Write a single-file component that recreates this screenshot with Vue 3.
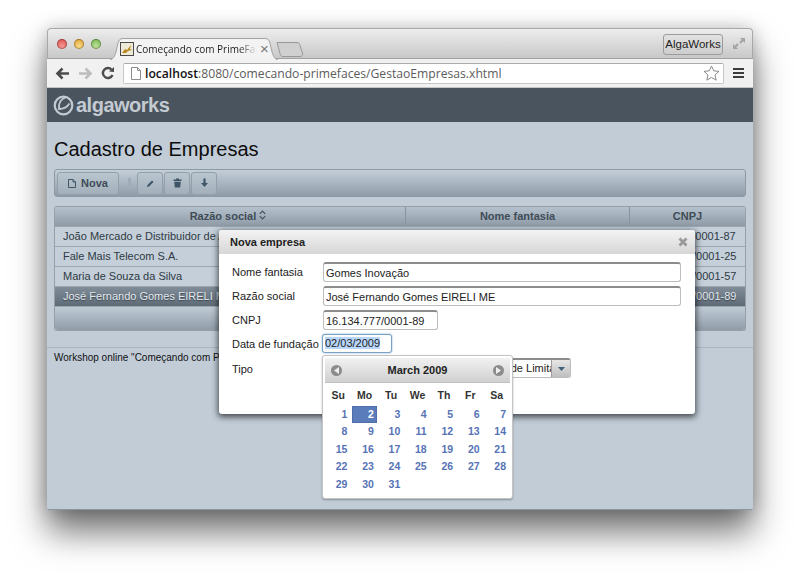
<template>
  <div class="stage">
    <div class="window">
      <!-- barra de abas do navegador -->
      <div class="tabstrip">
        <div class="lights">
          <span class="light light--red"></span>
          <span class="light light--yellow"></span>
          <span class="light light--green"></span>
        </div>
        <div class="tab">
          <svg class="tab__shape" width="168" height="22" viewBox="0 0 168 22">
            <path d="M0 21.500 C3 21.500 4.500 19 6 14 L8 5 C9 2 10 0.500 13 0.500 H155 C158 0.500 159 2 160 5 L162 14 C163.500 19 165 21.500 168 21.500" fill="#f3f3f3" stroke="#a2a2a2" />
          </svg>
          <svg class="favicon" width="14" height="14" viewBox="0 0 14 14">
            <rect x="0.500" y="0.500" width="13" height="13" fill="#efe9d8" stroke="#4a4a4a" />
            <path d="M2 11 L5 7 L7 8 L11 3 L10 7 L12 8 L8 9 L6 11 Z" fill="#b98a22" />
          </svg>
          <span class="tab__title">Começando com PrimeFaces</span>
          <span class="tab__close">×</span>
        </div>
        <svg class="newtab" width="28" height="15" viewBox="0 0 28 15">
          <path d="M1 0.500 H21 C23 0.500 23.500 2 24 3.500 L26.500 11 C27 13 26 14.500 24 14.500 H7 C5 14.500 4.500 13 4 11.500 Z" fill="#d0d0d0" stroke="#989898" />
        </svg>
        <div class="profile">AlgaWorks</div>
        <svg class="expand" width="14" height="13" viewBox="0 0 14 13">
          <path d="M8 1 H13 V6 L11.300 4.300 L8.800 6.800 L7.200 5.200 L9.700 2.700 Z M1 7 L2.700 8.700 L5.200 6.200 L6.800 7.800 L4.300 10.300 L6 12 H1 Z" fill="#a4a4a4" />
        </svg>
      </div>

      <!-- barra de endereço -->
      <div class="navbar">
        <svg class="navicon" width="15" height="13" viewBox="0 0 15 13">
          <path d="M14 6.500 H3 M7.500 1.500 L2.500 6.500 L7.500 11.500" fill="none" stroke="#4c4c4c" stroke-width="2.600" />
        </svg>
        <svg class="navicon" width="15" height="13" viewBox="0 0 15 13">
          <path d="M1 6.500 H12 M7.500 1.500 L12.500 6.500 L7.500 11.500" fill="none" stroke="#bdbdbd" stroke-width="2.600" />
        </svg>
        <svg class="navicon" width="14" height="14" viewBox="0 0 14 14">
          <path d="M11.500 9 A5 5 0 1 1 10.500 3.500" fill="none" stroke="#4c4c4c" stroke-width="2.400" />
          <path d="M8 5.500 L13 6 L13 1 Z" fill="#4c4c4c" />
        </svg>
        <div class="urlbar">
          <svg width="10" height="13" viewBox="0 0 10 13">
            <path d="M0.500 0.500 H6.500 L9.500 3.500 V12.500 H0.500 Z M6.500 0.500 V3.500 H9.500" fill="#fff" stroke="#8d8d8d" />
          </svg>
          <span class="urlbar__text"><b>localhost</b>:8080/comecando-primefaces/GestaoEmpresas.xhtml</span>
          <svg class="urlbar__star" width="17" height="16" viewBox="0 0 17 16">
            <path d="M8.500 1 L10.700 5.800 L16 6.400 L12 10 L13.200 15.200 L8.500 12.500 L3.800 15.200 L5 10 L1 6.400 L6.300 5.800 Z" fill="#fff" stroke="#8a8a8a" />
          </svg>
        </div>
        <div class="hamburger"><i></i><i></i><i></i></div>
      </div>

      <!-- topo da aplicação -->
      <header class="brand">
        <svg width="21" height="21" viewBox="0 0 21 21">
          <circle cx="10.500" cy="10.500" r="8.800" fill="none" stroke="#c3cad1" stroke-width="2.200" />
          <path d="M12.500 2.500 C8 4 5.500 8 6 14 C10 14 14 12.500 16.500 8.500" fill="none" stroke="#c3cad1" stroke-width="1.800" />
        </svg>
        <span class="brand__name">algaworks</span>
      </header>

      <main class="content">
        <h1 class="title">Cadastro de Empresas</h1>

        <div class="toolbar">
          <button class="tbtn tbtn--text">
            <svg width="8" height="9" viewBox="0 0 8 9">
              <path d="M0.500 0.500 H5 L7.500 3 V8.500 H0.500 Z M5 0.500 V3 H7.500" fill="none" stroke="#3d5566" />
            </svg>
            Nova
          </button>
          <span class="tsep"></span>
          <div class="tgroup">
            <button class="tbtn tbtn--icon">
              <svg width="9" height="9" viewBox="0 0 9 9">
                <path d="M1 8 L1.500 6 L6 1.500 L7.500 3 L3 7.500 Z" fill="#3d5566" />
              </svg>
            </button>
            <button class="tbtn tbtn--icon">
              <svg width="9" height="10" viewBox="0 0 9 10">
                <path d="M0.500 1.500 H3 V0.500 H6 V1.500 H8.500 V3 H0.500 Z M1.200 3.800 H7.800 L7.200 9.500 H1.800 Z" fill="#3d5566" />
              </svg>
            </button>
            <button class="tbtn tbtn--icon">
              <svg width="9" height="10" viewBox="0 0 9 10">
                <path d="M3.400 0.500 H5.600 V5 H8 L4.500 9 L1 5 H3.400 Z" fill="#3d5566" />
              </svg>
            </button>
          </div>
        </div>

        <div class="grid">
          <div class="grid__head">
            <div class="cell cell--name cell--sortable">
              Razão social
              <svg width="7" height="10" viewBox="0 0 7 10">
                <path d="M0.800 3.800 L3.500 1 L6.200 3.800 M0.800 6.200 L3.500 9 L6.200 6.200" fill="none" stroke="#46525e" stroke-width="1.200" />
              </svg>
            </div>
            <div class="cell cell--fantasy">Nome fantasia</div>
            <div class="cell cell--cnpj">CNPJ</div>
          </div>
          <div v-for="(row, i) in companies" :key="i" class="grid__row" :class="{ 'grid__row--selected': row.selected }">
            <div class="cell cell--name">{{ row.name }}</div>
            <div class="cell cell--fantasy"></div>
            <div class="cell cell--cnpj">{{ row.cnpj }}</div>
          </div>
          <div class="grid__foot"></div>
        </div>

        <footer class="footer">Workshop online "Começando com PrimeFaces"</footer>
      </main>

      <!-- diálogo por cima da página -->
      <div class="dialog">
        <div class="dialog__title">
          <span>Nova empresa</span>
          <svg width="10" height="10" viewBox="0 0 10 10">
            <path d="M1.500 1.500 L8.500 8.500 M8.500 1.500 L1.500 8.500" stroke="#9a9a9a" stroke-width="2.800" />
          </svg>
        </div>
        <div class="form">
          <label class="form__label">Nome fantasia</label>
          <input class="input input--wide" value="Gomes Inovação" readonly />
          <label class="form__label">Razão social</label>
          <input class="input input--wide" value="José Fernando Gomes EIRELI ME" readonly />
          <label class="form__label">CNPJ</label>
          <input class="input input--cnpj" value="16.134.777/0001-89" readonly />
          <label class="form__label">Data de fundação</label>
          <div class="input input--date"><span>02/03/2009</span></div>
          <label class="form__label form__label--last">Tipo</label>
          <div class="select">
            <span class="select__label">Sociedade Limitada</span>
            <span class="select__btn">
              <svg width="7" height="4" viewBox="0 0 7 4"><path d="M0 0 H7 L3.500 4 Z" fill="#3f5f7a" /></svg>
            </span>
          </div>
        </div>

        <div class="calendar">
          <div class="calendar__head">
            <span class="calendar__nav"><svg width="5" height="7" viewBox="0 0 5 7"><path d="M5 0 V7 L0 3.500 Z" fill="#eee" /></svg></span>
            <span class="calendar__month">March 2009</span>
            <span class="calendar__nav"><svg width="5" height="7" viewBox="0 0 5 7"><path d="M0 0 V7 L5 3.500 Z" fill="#eee" /></svg></span>
          </div>
          <div class="calendar__week">
            <span v-for="d in weekDays" :key="d">{{ d }}</span>
          </div>
          <div class="calendar__days">
            <span v-for="n in 31" :key="n" class="day" :class="{ 'day--active': n === 2 }">{{ n }}</span>
          </div>
        </div>
      </div>
    </div>
  </div>
</template>

<script setup>
const companies = [
  { name: 'João Mercado e Distribuidor de Alimentos', cnpj: '11.222.333/0001-87' },
  { name: 'Fale Mais Telecom S.A.', cnpj: '22.333.444/0001-25' },
  { name: 'Maria de Souza da Silva', cnpj: '33.444.555/0001-57' },
  { name: 'José Fernando Gomes EIRELI ME', cnpj: '16.134.777/0001-89', selected: true },
]

const weekDays = ['Su', 'Mo', 'Tu', 'We', 'Th', 'Fr', 'Sa']
</script>

<style>
html, body {
  margin: 0;
  background: #fff;
}
</style>

<style scoped>
.stage {
  width: 800px;
  height: 575px;
  box-sizing: border-box;
  padding: 28px 47px 0;
  overflow: hidden;
  background: #fff;
  font-family: "Liberation Sans", Arial, sans-serif;
}

.window {
  position: relative;
  width: 706px;
  height: 482px;
  border-radius: 4px 4px 2px 2px;
  box-shadow: 0 22px 34px rgba(0, 0, 0, 0.55), 0 0 18px rgba(0, 0, 0, 0.22);
  display: flex;
  flex-direction: column;
}

/* Abas */
.tabstrip {
  display: flex;
  align-items: flex-end;
  height: 31px;
  flex-shrink: 0;
  box-sizing: border-box;
  border: 1px solid #a8a8a8;
  border-bottom: 1px solid #a2a2a2;
  border-radius: 4px 4px 0 0;
  background: linear-gradient(#ededed, #c8c8c8);
}

.lights {
  display: flex;
  gap: 7px;
  align-self: flex-start;
  margin: 10px 0 0 9px;
}

.light {
  width: 10px;
  height: 10px;
  border-radius: 50%;
  box-shadow: inset 0 0 0 1px rgba(0, 0, 0, 0.28);
}
.light--red { background: radial-gradient(circle at 50% 70%, #f49a98, #d9403c); }
.light--yellow { background: radial-gradient(circle at 50% 70%, #f7d98a, #dd9a22); }
.light--green { background: radial-gradient(circle at 50% 70%, #bce29a, #6fae42); }

.tab {
  position: relative;
  display: flex;
  align-items: center;
  flex-shrink: 0;
  width: 168px;
  height: 21px;
  margin: 0 0 -1px 9px;
  padding-left: 10px;
  box-sizing: border-box;
}

.tab__shape {
  position: absolute;
  left: 0;
  top: 0;
}

.favicon {
  position: relative;
  margin-right: 2px;
  flex-shrink: 0;
}

.tab__title {
  position: relative;
  width: 121px;
  overflow: hidden;
  white-space: nowrap;
  font-family: "Open Sans", sans-serif;
  font-size: 10px;
  color: #222;
  -webkit-mask-image: linear-gradient(to right, #000 85%, transparent);
  mask-image: linear-gradient(to right, #000 85%, transparent);
}

.tab__close {
  position: relative;
  margin-left: 3px;
  font-size: 15px;
  line-height: 1;
  color: #777;
}

.newtab {
  margin: 0 0 1px -2px;
}

.profile {
  align-self: flex-start;
  margin: 5px 0 0 auto;
  width: 60px;
  height: 21px;
  box-sizing: border-box;
  border: 1px solid #9c9c9c;
  border-radius: 3px;
  background: linear-gradient(#e2e2e2, #cdcdcd);
  font-size: 11.500px;
  line-height: 19px;
  text-align: center;
  color: #222;
}

.expand {
  align-self: flex-start;
  margin: 8px 6px 0 9px;
}

/* Endereço */
.navbar {
  display: flex;
  align-items: center;
  height: 29px;
  flex-shrink: 0;
  box-sizing: border-box;
  padding: 0 9px 0 8px;
  background: #f1f1f1;
  border-bottom: 1px solid #c4c4c4;
  gap: 8px;
}

.urlbar {
  display: flex;
  align-items: center;
  flex: 1;
  height: 21px;
  box-sizing: border-box;
  padding: 0 3px 0 7px;
  background: #fff;
  border: 1px solid #c6c6c6;
  border-top-color: #ababab;
  border-radius: 2px;
  gap: 4px;
}

.urlbar__text {
  flex: 1;
  white-space: nowrap;
  font-family: "Open Sans", sans-serif;
  font-size: 12.150px;
  color: #5c5c5c;
}

.urlbar__text b {
  font-weight: 600;
  color: #111;
}

.hamburger {
  display: flex;
  flex-direction: column;
  gap: 2px;
  width: 11px;
  margin-left: 1px;
}

.hamburger i {
  display: block;
  height: 2px;
  background: #3c3c3c;
}

/* Marca */
.brand {
  display: flex;
  align-items: center;
  gap: 2px;
  height: 34px;
  flex-shrink: 0;
  padding-left: 6px;
  background: #4a545e;
}

.brand__name {
  font-size: 20px;
  font-weight: 700;
  letter-spacing: -0.5px;
  color: #c3cad1;
}

/* Conteúdo */
.content {
  flex: 1;
  padding: 0 7px;
  background: #c1ccd7;
  border-radius: 0 0 2px 2px;
  border-bottom: 1px solid #8b96a0;
}

.title {
  margin: 15px 0 7px;
  font-size: 20px;
  font-weight: 400;
  line-height: 25px;
  color: #0d0d0d;
}

.toolbar {
  display: flex;
  align-items: center;
  height: 28px;
  box-sizing: border-box;
  padding: 0 2px;
  border: 1px solid #8d9aa6;
  border-radius: 3px;
  background: linear-gradient(#c3ced8, #8f9ca8);
}

.tbtn {
  display: flex;
  align-items: center;
  justify-content: center;
  height: 23px;
  box-sizing: border-box;
  padding: 0;
  border: 1px solid #939fab;
  border-radius: 3px;
  background: linear-gradient(#b9c5cf, #a3b0bb);
  font-family: inherit;
  font-size: 11px;
  font-weight: 700;
  color: #3f4c58;
}

.tbtn--text {
  width: 62px;
  gap: 5px;
}

.tbtn--icon {
  width: 26px;
}

.tsep {
  width: 3px;
  height: 11px;
  margin: 0 6px 0 9px;
  background: #a0acb7;
}

.tgroup {
  display: flex;
  gap: 1px;
}

.grid {
  margin-top: 9px;
  width: 692px;
  border: 1px solid #93a0ac;
  border-top: 0;
  border-radius: 3px;
  box-sizing: border-box;
  font-size: 11px;
}

.grid__head,
.grid__row {
  display: flex;
}

.grid__head {
  height: 20px;
  border-top: 1px solid #93a0ac;
  box-sizing: border-box;
  background: linear-gradient(#b5c1cc, #8e9ba7);
  font-weight: 700;
  color: #3f4c58;
}

.grid__head .cell {
  text-align: center;
  border-right: 1px solid #8794a0;
}

.grid__head .cell:last-child {
  border-right: 0;
}

.grid__head .cell--sortable {
  padding-right: 12px;
}

.grid__row {
  height: 20px;
  box-sizing: border-box;
  background: #c4cfd9;
  border-top: 1px solid #9ba8b4;
  color: #2f3a44;
}

.grid__row--selected {
  background: linear-gradient(#808d99, #5e6b76);
  color: #e4e9ee;
  text-shadow: 0 1px 1px #3a444d;
}

.grid__foot {
  height: 23px;
  border-top: 1px solid #9ba8b4;
  background: linear-gradient(#bfcad4, #8f9ca8);
  border-radius: 0 0 3px 3px;
}

.cell {
  box-sizing: border-box;
  padding: 2px 8px;
  line-height: 14px;
  white-space: nowrap;
  overflow: hidden;
}

.cell--name { width: 351px; }
.cell--fantasy { width: 224px; }
.cell--cnpj { flex: 1; }

.footer {
  margin: 16px -7px 0;
  padding: 3px 7px 0;
  border-top: 1px solid #aab5c0;
  font-size: 10px;
  line-height: 14px;
  color: #111;
}

/* Diálogo */
.dialog {
  position: absolute;
  left: 172px;
  top: 202px;
  width: 476px;
  height: 184px;
  background: #fff;
  border-radius: 3px;
  box-shadow: 0 2px 6px 1px rgba(0, 0, 0, 0.65);
}

.dialog__title {
  display: flex;
  align-items: center;
  justify-content: space-between;
  height: 24px;
  padding: 0 7px 0 11px;
  border-radius: 3px 3px 0 0;
  background: linear-gradient(#f3f3f3, #d6d6d6);
  font-size: 11px;
  font-weight: 700;
  color: #222;
}

.form {
  display: grid;
  grid-template-columns: 91px auto;
  align-items: center;
  justify-items: start;
  row-gap: 4px;
  padding: 8px 14px 0 13px;
}

.form__label {
  font-size: 11px;
  color: #222;
}

.form__label--last {
  padding-top: 2px;
}

.input {
  height: 20px;
  box-sizing: border-box;
  margin: 0;
  padding: 0 2px;
  border: 1px solid #bdbdbd;
  border-top: 2px solid #8c8c8c;
  border-radius: 3px;
  background: #fff;
  font-family: inherit;
  font-size: 11px;
  color: #222;
  outline: none;
}

.input--wide { width: 358px; }
.input--cnpj { width: 115px; }

.input--date {
  width: 70px;
  height: 19px;
  margin-left: -1px;
  border: 1px solid #7aa0c4;
  box-shadow: 0 0 2px #7aa8d4;
  line-height: 17px;
}

.input--date span {
  background: #b8d6fb;
}

.select {
  display: flex;
  width: 248px;
  height: 20px;
  margin-top: 1px;
  box-sizing: border-box;
  border: 1px solid #bdbdbd;
  border-top: 2px solid #8c8c8c;
  border-radius: 3px;
  overflow: hidden;
}

.select__label {
  flex: 1;
  overflow: hidden;
  white-space: nowrap;
  padding-left: 147px;
  font-size: 11px;
  line-height: 17px;
  color: #222;
}

.select__btn {
  display: flex;
  align-items: center;
  justify-content: center;
  width: 18px;
  background: linear-gradient(#e6e6e6, #bfbfbf);
  border-left: 1px solid #9c9c9c;
}

/* Calendário */
.calendar {
  position: absolute;
  left: 103px;
  top: 125px;
  width: 191px;
  height: 144px;
  box-sizing: border-box;
  padding: 2px;
  background: #fff;
  border: 1px solid #c4c4c4;
  border-radius: 3px;
  box-shadow: 0 1px 2px rgba(0, 0, 0, 0.3);
}

.calendar__head {
  display: flex;
  align-items: center;
  justify-content: space-between;
  height: 25px;
  padding: 0 6px;
  background: linear-gradient(#f1f1f1, #d0d0d0);
  border-bottom: 1px solid #c0c0c0;
  box-sizing: border-box;
}

.calendar__nav {
  display: flex;
  align-items: center;
  justify-content: center;
  width: 11px;
  height: 11px;
  border-radius: 50%;
  background: #8c8c8c;
}

.calendar__month {
  font-size: 11px;
  font-weight: 700;
  color: #222;
}

.calendar__week,
.calendar__days {
  display: grid;
  grid-template-columns: repeat(7, 1fr);
}

.calendar__week {
  margin-top: 5px;
  font-size: 10.500px;
  font-weight: 700;
  line-height: 14px;
  text-align: center;
  color: #333;
}

.calendar__days {
  margin-top: 4px;
  font-size: 10.500px;
  font-weight: 700;
  line-height: 17.400px;
  text-align: right;
  color: #5673b5;
}

.calendar__days .day {
  padding-right: 4px;
}

.calendar__days .day--active {
  margin-left: 1px;
  margin-right: 1px;
  padding-right: 3px;
  background: #5a7cba;
  box-shadow: inset 0 0 0 1px #4e6ea8;
  color: #fff;
}
</style>
